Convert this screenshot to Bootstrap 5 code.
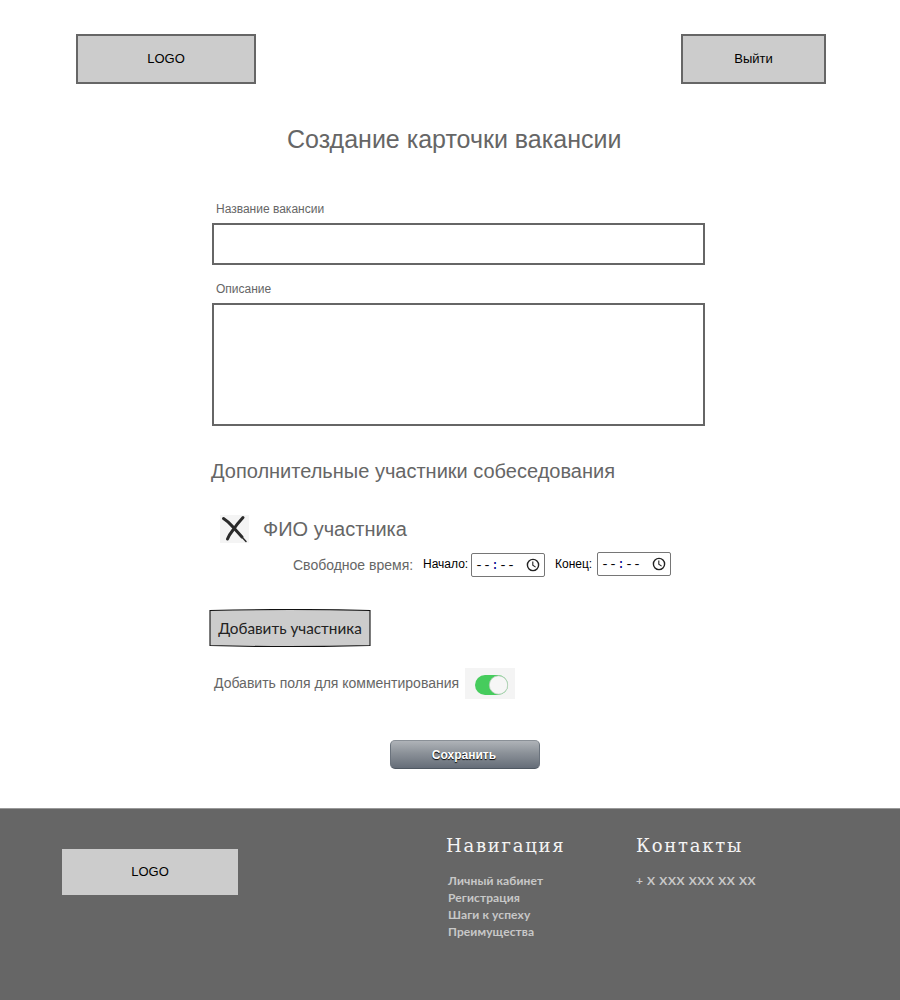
<!DOCTYPE html>
<html lang="ru">
<head>
<meta charset="utf-8">
<title>Создание карточки вакансии</title>
<link href="https://cdn.jsdelivr.net/npm/bootstrap@5.3.0/dist/css/bootstrap.min.css" rel="stylesheet">
<style>
body{font-family:"Liberation Sans",Arial,sans-serif;color:#666;background:#fff;width:900px;height:1000px;overflow:hidden;white-space:nowrap}
.site-head{height:84px;padding:34px 74px 0 76px}
.plate{height:50px;background:#ccc;border:2px solid #666;color:#000;font:13px/45px "Liberation Sans",sans-serif;text-align:center;padding:0;border-radius:0}
.plate-logo{width:180px}.plate-exit{width:145px;padding-bottom:2px}
main{height:724px;padding:40px 195px 0 212px}
h1{font-size:25px;line-height:30px;margin:0 0 46px 75px}
.form-label{display:block;font-size:12px;line-height:18px;margin:0 0 5px 4px}
.form-control,.form-control:focus{border:2px solid #666;border-radius:0;padding:4px;box-shadow:none;resize:none}
.f-name{height:42px;margin-bottom:15px}.f-desc{height:123px;margin-bottom:31px}
h2{font-size:20px;line-height:28px;margin:0 0 30px -1px}
.person{height:28px;margin-left:8px;font-size:20px;line-height:28px;gap:14px}
.slots{height:25px;margin:10px 0 31px 81px;font-size:14px;line-height:25px}
.slots .cap{font:12px/23px "Liberation Sans",sans-serif;color:#000}
.timebox{width:74px;height:24px;border:1px solid #767676;border-radius:2px;background:#fff;color:#000;font:13.33px/24px "Liberation Mono",monospace;padding:0 4px 0 3px}
.timebox span{padding-top:2px}
.add-btn{width:162px;height:38px;margin-left:-3px;color:#222;border:0;padding:0;font:15.3px/38px Lato,sans-serif;background:none;position:relative}
.add-btn svg{position:absolute;inset:0}
.add-btn span{position:relative}
.comments{height:31px;margin:21px 0 41px 2px;font-size:14px;line-height:31px}
.save{display:block;width:150px;height:29px;margin-left:178px;padding:1px 2px 0 0;border:1px solid;border-color:#8a9097 #6b737d #4f5862;border-radius:5px;background:linear-gradient(#afb3b8,#8b9198 45%,#656d78);color:#fff;font:bold 12px/27px "Liberation Sans",sans-serif;text-shadow:0 1px 1px #000}
footer{height:192px;background:#666;border-top:1px solid #999;padding:25px 0 0 62px;color:#ccc}
.foot-logo{width:176px;height:46px;background:#ccc;color:#000;font:13px/45px "Liberation Sans",sans-serif;text-align:center;margin-top:15px}
.foot-nav{margin-left:208px;width:190px}
h3{font:18px/24px "DejaVu Serif",serif;letter-spacing:1.75px;color:#f4f4f4;margin:0 0 14px}
.foot-list{font:bold 12px/17px Lato,sans-serif;letter-spacing:.1px;color:#c8c8c8}
.foot-phone{letter-spacing:.6px}
.foot-list a{color:inherit;text-decoration:none;display:block;width:max-content;margin-left:2px}
</style>
</head>
<body>
<header class="site-head d-flex justify-content-between">
  <div class="plate plate-logo">LOGO</div>
  <button class="plate plate-exit">Выйти</button>
</header>
<main>
  <h1 class="fw-normal">Создание карточки вакансии</h1>
  <label class="form-label" for="name">Название вакансии</label>
  <input class="form-control f-name" id="name">
  <label class="form-label" for="desc">Описание</label>
  <textarea class="form-control f-desc" id="desc"></textarea>
  <h2 class="fw-normal">Дополнительные участники собеседования</h2>
  <div class="person d-flex">
    <svg width="29" height="28" viewBox="0 0 29 28" fill="none" stroke="#2a2a2a" stroke-linecap="round" stroke-linejoin="round"><path fill="#f4f4f4" stroke="none" d="M0 0h29v28H0z"/><path stroke-width="3" d="M3.500 3.500Q9 7 13 12L22 22M23 2.500Q17 9 13 15Q9 20 7.500 24"/><path stroke-width="1.500" d="M21 21L26 26.500"/></svg>
    <span>ФИО участника</span>
  </div>
  <div class="slots d-flex">
    <span style="width:130px">Свободное время:</span>
    <span class="cap" style="width:48px">Начало:</span>
    <div class="timebox d-flex align-items-center justify-content-between"><span>--<b class="fw-normal" style="color:#00008b">:</b>--</span><svg width="14" height="14" viewBox="0 0 14 14" fill="none" stroke="#222" stroke-width="1.4"><circle cx="7" cy="7" r="5.6"/><path d="M6.8 3.500v3.800l2.800 1.800" stroke-width="1.1"/></svg></div>
    <span class="cap" style="width:42px;margin-left:10px">Конец:</span>
    <div class="timebox d-flex align-items-center justify-content-between" style="margin-top:-1px"><span>--<b class="fw-normal" style="color:#00008b">:</b>--</span><svg width="14" height="14" viewBox="0 0 14 14" fill="none" stroke="#222" stroke-width="1.4"><circle cx="7" cy="7" r="5.6"/><path d="M6.8 3.500v3.800l2.800 1.800" stroke-width="1.1"/></svg></div>
  </div>
  <button class="add-btn d-block"><svg width="162" height="38"><path d="M1 1.5Q80-.5 161 1.5V36.5Q80 38.8 1 36.5Z" fill="#ccc" stroke="#111" stroke-width="1.1"/></svg><span>Добавить участника</span></button>
  <div class="comments d-flex">
    <span style="width:251px">Добавить поля для комментирования</span>
    <svg width="50" height="31"><path fill="#f4f4f4" d="M0 0h50v31H0z"/><rect x="10" y="7" width="33" height="20" rx="10" fill="#46cc5d"/><circle cx="33.5" cy="17" r="9.2" fill="#f6f6f6" stroke="#b9cdbb" stroke-width=".8"/></svg>
  </div>
  <button class="save">Сохранить</button>
</main>
<footer class="d-flex align-items-start">
  <div class="foot-logo">LOGO</div>
  <nav class="foot-nav">
    <h3>Навигация</h3>
    <div class="foot-list"><a href="#">Личный кабинет</a><a href="#">Регистрация</a><a href="#">Шаги к успеху</a><a href="#">Преимущества</a></div>
  </nav>
  <div>
    <h3>Контакты</h3>
    <div class="foot-list foot-phone">+ X XXX XXX XX XX</div>
  </div>
</footer>
<script src="https://cdn.jsdelivr.net/npm/bootstrap@5.3.0/dist/js/bootstrap.bundle.min.js"></script>
</body>
</html>
